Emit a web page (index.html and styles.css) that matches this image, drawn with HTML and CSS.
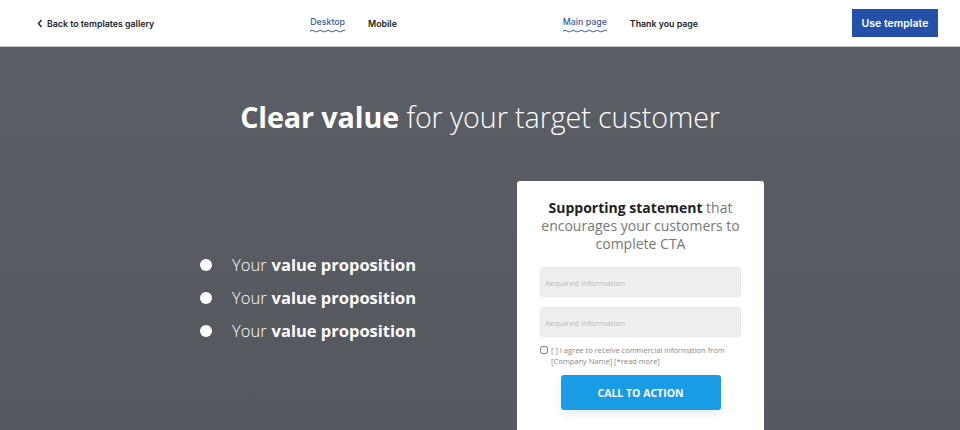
FILE: index.html
```html
<!DOCTYPE html>
<html lang="en">
<head>
  <meta charset="UTF-8" />
  <meta name="viewport" content="width=device-width, initial-scale=1.0"/>
  <title>Template preview</title>
  <link rel="stylesheet" href="styles.css">
</head>
<body>

  <header class="topbar">
    <a class="back" href="#">
      <svg width="6" height="9" viewBox="0 0 6 9"><path d="M4.5 1 1.5 4.5 4.5 8" fill="none" stroke="#222" stroke-width="1.4"/></svg>
      Back to templates gallery
    </a>
    <nav class="tabs devices">
      <a class="tab active" href="#">Desktop</a>
      <a class="tab" href="#">Mobile</a>
    </nav>
    <nav class="tabs pages">
      <a class="tab active" href="#">Main page</a>
      <a class="tab" href="#">Thank you page</a>
    </nav>
    <button class="use-btn">Use template</button>
  </header>

  <main class="preview">
    <h1><strong>Clear value</strong> for your target customer</h1>

    <div class="columns">
      <ul class="values">
        <li>Your <strong>value proposition</strong></li>
        <li>Your <strong>value proposition</strong></li>
        <li>Your <strong>value proposition</strong></li>
      </ul>

      <form class="card">
        <h2><strong>Supporting statement</strong> that encourages your customers to complete CTA</h2>
        <input type="text" placeholder="Required information">
        <input type="text" placeholder="Required information">
        <label class="agree">
          <input type="checkbox">
          <span>[ ] I agree to receive commercial information from [Company Name] [*read more]</span>
        </label>
        <button type="button" class="cta">CALL TO ACTION</button>
      </form>
    </div>
  </main>

</body>
</html>
```

FILE: styles.css
```css
* { box-sizing: border-box; }
body { margin: 0; height: 430px; overflow: hidden; background: #585c62; font-family: "Open Sans", sans-serif; }

.topbar {
  height: 47px; background: #fff; border-bottom: 1px solid #c9cbcf;
  display: flex; align-items: center; padding: 0 22px 0 37px;
  font-family: Inter, "Liberation Sans", sans-serif; font-size: 8.8px; font-weight: 600;
}
.topbar a { color: #222; text-decoration: none; }
.back { display: flex; align-items: center; gap: 4px; }
.tabs { display: flex; gap: 23px; align-items: center; }
.devices { margin-left: 156px; }
.pages { margin-left: 166px; }
.tab { position: relative; }
.tab.active { color: #3a5aa0 !important; font-weight: 500; padding-bottom: 4px; }
.tab.active::after {
  content: ""; position: absolute; left: 0; right: 0; top: 13px; height: 4px;
  background: url("data:image/svg+xml,%3Csvg xmlns='http://www.w3.org/2000/svg' width='8' height='4' viewBox='0 0 8 4'%3E%3Cpath d='M0 2.5 Q2 0 4 2 T8 2' fill='none' stroke='%233a5aa0' stroke-width='1'/%3E%3C/svg%3E") repeat-x;
}
.use-btn {
  margin-left: auto; background: #2550a9; color: #fff; border: none;
  width: 86px; height: 28px; font: 600 10.5px Inter, "Liberation Sans", sans-serif;
}

.preview { background: linear-gradient(#5b5f65, #55585e); height: 383px; }
h1 {
  margin: 0; padding-top: 50px; text-align: center; color: #fff;
  font-size: 28.7px; font-weight: 300; letter-spacing: -0.1px;
}
h1 strong { font-weight: 700; }

.columns { width: 568px; margin: 45px auto 0; display: flex; padding-left: 4px; }
.values { flex: 1; list-style: none; margin: 0; padding: 67px 0 0; color: #fff; font-size: 16.5px; font-weight: 300; }
.values li { display: flex; align-items: center; height: 33px; }
.values li::before {
  content: ""; width: 12px; height: 12px; border-radius: 50%; background: #fff;
  margin-right: 20px;
}
.values strong { font-weight: 700; margin-left: 5px; }

.card {
  width: 247px; height: 260px; background: #fff; border-radius: 3px;
  padding: 18px 23px 0; display: flex; flex-direction: column;
}
.card h2 {
  margin: 0 -6px 14px; text-align: center; font-size: 14px; font-weight: 400;
  line-height: 18px; color: #777;
}
.card h2 strong { color: #222; font-weight: 700; }
.card input[type="text"] {
  height: 30px; margin-bottom: 10px; border: 1px solid #eaeaea; border-radius: 3px;
  background: #efefef; padding: 0 4px; font: 8px "Open Sans", sans-serif;
}
.card input::placeholder { color: #bbb; }
.agree { display: flex; gap: 3px; font-size: 7.5px; line-height: 11px; color: #888; margin-top: -2px; }
.agree input { width: 8px; height: 8px; margin: 1px 0 0; }
.cta {
  margin: 8px auto 0; width: 160px; height: 35px; border: none; border-radius: 3px;
  background: #1a9be6; color: #fff; font: 700 10.5px "Open Sans", sans-serif;
  box-shadow: 0 4px 10px rgba(0,0,0,0.08);
}
```
